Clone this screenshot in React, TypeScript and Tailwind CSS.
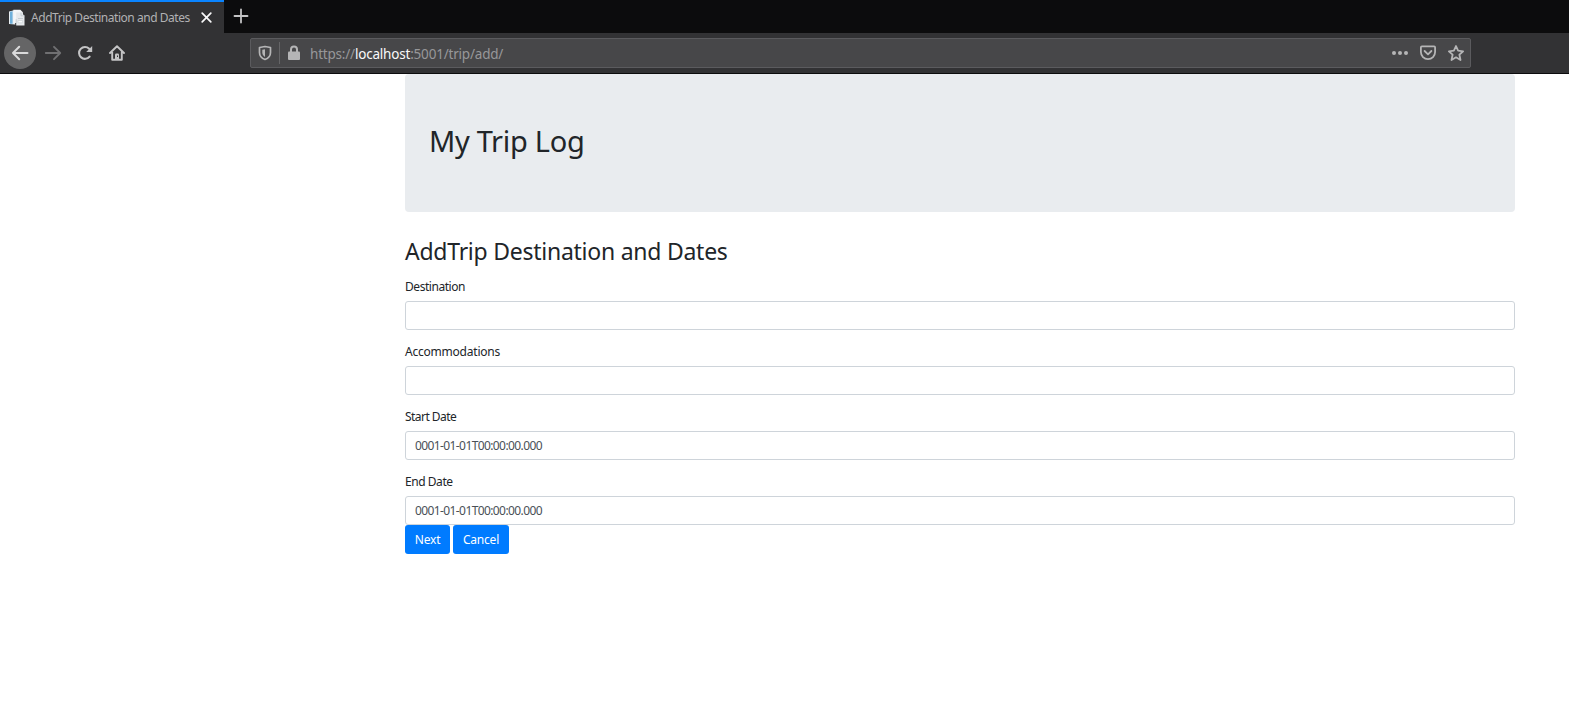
function BrowserTabs() {
  return (
    <div className="flex h-[33px] bg-[#0c0c0d]">
      <div className="flex w-[224px] items-center border-t-2 border-[#0a84ff] bg-[#323234] pl-2">
        <svg className="shrink-0" width="18" height="18" viewBox="0 0 18 18">
          <path d="M1 2.5 7 1v14.5L1 15z" fill="#e8eef2" />
          <path d="M2 2.8 4.6 2.3v12.5L2 14.8z" fill="#6fb0da" />
          <path d="M5.4 .8h7l2.5 2.4V14H5.4z" fill="#f4f6f8" />
          <path d="M8.2 3.5h5l3.3 3.2v9.8H8.2z" fill="#e6e9ec" />
          <path d="M13 3.5v3.3h3.5M10 9.5h5M8.2 10.2v5.6" stroke="#bcc5cc" fill="none" strokeWidth=".8" />
          <path d="M10 11.5h4.6v2.3H10z" fill="#f8fafb" stroke="#c8cfd4" strokeWidth=".6" />
        </svg>
        <span className="ml-[5px] w-[166px] whitespace-nowrap text-[12px] leading-[18px] tracking-[-0.46px] text-[#b1b1b3]">
          AddTrip Destination and Dates
        </span>
        <svg className="mb-px ml-1 shrink-0" width="11" height="11" viewBox="0 0 11 11">
          <path d="M1.2 1.2l8.6 8.6M9.8 1.2 1.2 9.8" stroke="#f9f9fa" strokeWidth="1.7" strokeLinecap="round" />
        </svg>
      </div>
      <div className="flex w-[33px] items-center justify-center">
        <svg className="mb-px" width="16" height="16" viewBox="0 0 16 16">
          <path d="M8 1.5v13M1.5 8h13" stroke="#c4c4c5" strokeWidth="1.8" strokeLinecap="round" />
        </svg>
      </div>
    </div>
  );
}

function BrowserToolbar() {
  return (
    <div className="flex h-[41px] items-center border-b border-[#0c0c0d] bg-[#323234]">
      <div className="ml-1 flex h-8 w-8 items-center justify-center rounded-full bg-[#656566]">
        <svg width="18" height="16" viewBox="0 0 18 16">
          <path d="M16.5 8H2M8.2 1.8 2 8l6.2 6.2" fill="none" stroke="#dadadb" strokeWidth="2" strokeLinecap="round" strokeLinejoin="round" />
        </svg>
      </div>
      <svg className="ml-2" width="18" height="16" viewBox="0 0 18 16">
        <path d="M1.8 8H16M10 1.8 16.2 8 10 14.2" fill="none" stroke="#707072" strokeWidth="1.9" strokeLinecap="round" strokeLinejoin="round" />
      </svg>
      <svg className="ml-[15px]" width="16" height="16" viewBox="0 0 16 16">
        <path d="M12.6 11.6A5.9 5.9 0 1 1 12.2 3.8" fill="none" stroke="#c4c4c5" strokeWidth="2.1" strokeLinecap="round" />
        <path d="M15.2 1v6H9.2z" fill="#c4c4c5" />
      </svg>
      <svg className="ml-4" width="16" height="16" viewBox="0 0 16 16">
        <path d="M1 8 8 1.2 15 8M3.2 7v7.8h9.6V7" fill="none" stroke="#c4c4c5" strokeWidth="1.9" strokeLinecap="round" strokeLinejoin="round" />
        <path d="M6 15V9.7q0-1.2 1.2-1.2h1.6q1.2 0 1.2 1.2V15z" fill="#c4c4c5" />
        <path d="M8.5 10.5v1.5" stroke="#323234" strokeWidth="1" />
      </svg>
      <div className="ml-[125px] flex h-[30px] w-[1221px] items-center rounded-[2px] border border-[#5b5b5e] bg-[#474749]">
        <svg className="ml-[7px]" width="14" height="16" viewBox="0 0 14 16">
          <path d="M7 1.5 12.5 2.5v5C12.5 11 10.5 13.2 7 14.5 3.5 13.2 1.5 11 1.5 7.5v-5z" fill="none" stroke="#b5b5b6" strokeWidth="1.7" strokeLinejoin="round" />
          <path d="M7 4.3v7.6C5.2 10.9 4.3 9.5 4.3 7.2V4.8z" fill="#b5b5b6" />
        </svg>
        <div className="ml-[7px] h-[22px] w-px bg-[#656567]" />
        <svg className="ml-2" width="12" height="16" viewBox="0 0 12 16">
          <path d="M3 7V4.5a3 3 0 0 1 6 0V7" fill="none" stroke="#b5b5b6" strokeWidth="2" />
          <rect y="6.5" width="12" height="8.5" rx="1" fill="#b5b5b6" />
        </svg>
        <span className="mt-0.5 ml-[10px] flex-1 whitespace-nowrap text-[13.5px] leading-5 tracking-[-0.2px] text-[#97979a]">
          https://<span className="text-[#f9f9fa]">localhost</span>:5001/trip/add/
        </span>
        <svg width="16" height="16" viewBox="0 0 16 16" fill="#b5b5b6">
          <circle cx="2" cy="8" r="2" />
          <circle cx="8" cy="8" r="2" />
          <circle cx="14" cy="8" r="2" />
        </svg>
        <svg className="ml-3" width="16" height="16" viewBox="0 0 16 16" fill="none" stroke="#b5b5b6" strokeWidth="1.8" strokeLinecap="round" strokeLinejoin="round">
          <path d="M1.9 1.4h12.2q1 0 1 1V7A7.1 7.1 0 0 1 .9 7V2.4q0-1 1-1z" />
          <path d="M4.6 6 8 9.3 11.4 6" />
        </svg>
        <svg className="mr-[6px] ml-3" width="16" height="16" viewBox="0 0 16 16">
          <path d="M8 1 10.1 5.7 15.1 6.3 11.4 9.7 12.5 15 8 12.3 3.5 15 4.6 9.7 .9 6.3 5.9 5.7z" fill="none" stroke="#b5b5b6" strokeWidth="1.8" strokeLinejoin="round" />
        </svg>
      </div>
    </div>
  );
}

type FieldProps = { label: string; value?: string; tracking: string };

function Field({ label, value = "", tracking }: FieldProps) {
  return (
    <label className="block">
      <span className={`block h-[21px] pt-px text-[12px] leading-[18px] whitespace-nowrap ${tracking}`}>{label}</span>
      <input
        className="mt-[3px] block h-[29px] w-full rounded-[3px] border border-[#ced4da] bg-white px-[9px] text-[12px] leading-[18px] tracking-[-0.6px] text-[#495057] outline-none"
        defaultValue={value}
      />
    </label>
  );
}

export default function App() {
  return (
    <div className="h-[719px] overflow-hidden bg-white font-['Noto_Sans','Open_Sans',sans-serif] text-[#212529]">
      <BrowserTabs />
      <BrowserToolbar />
      <main className="ml-[405px] w-[1110px]">
        <header className="h-[138px] rounded-[4px] bg-[#e9ecef] px-6 pt-[47px]">
          <h1 className="text-[29px] leading-10 tracking-[-0.3px] whitespace-nowrap">My Trip Log</h1>
        </header>
        <h2 className="mt-[23px] text-[23px] leading-8 tracking-[-0.25px] whitespace-nowrap">AddTrip Destination and Dates</h2>
        <form className="mt-[10px]" onSubmit={(e) => e.preventDefault()}>
          <div className="flex flex-col gap-3">
            <Field label="Destination" tracking="tracking-[-0.45px]" />
            <Field label="Accommodations" tracking="tracking-[-0.22px]" />
            <Field label="Start Date" value="0001-01-01T00:00:00.000" tracking="tracking-[-0.55px]" />
            <Field label="End Date" value="0001-01-01T00:00:00.000" tracking="tracking-[-0.45px]" />
          </div>
          <div className="flex gap-[3px]">
            <button className="h-[29px] w-[45px] rounded-[3px] bg-[#007bff] text-[12px] tracking-[-0.2px] text-white">Next</button>
            <button className="h-[29px] w-[56px] rounded-[3px] bg-[#007bff] text-[12px] tracking-[-0.2px] text-white">Cancel</button>
          </div>
        </form>
      </main>
    </div>
  );
}
